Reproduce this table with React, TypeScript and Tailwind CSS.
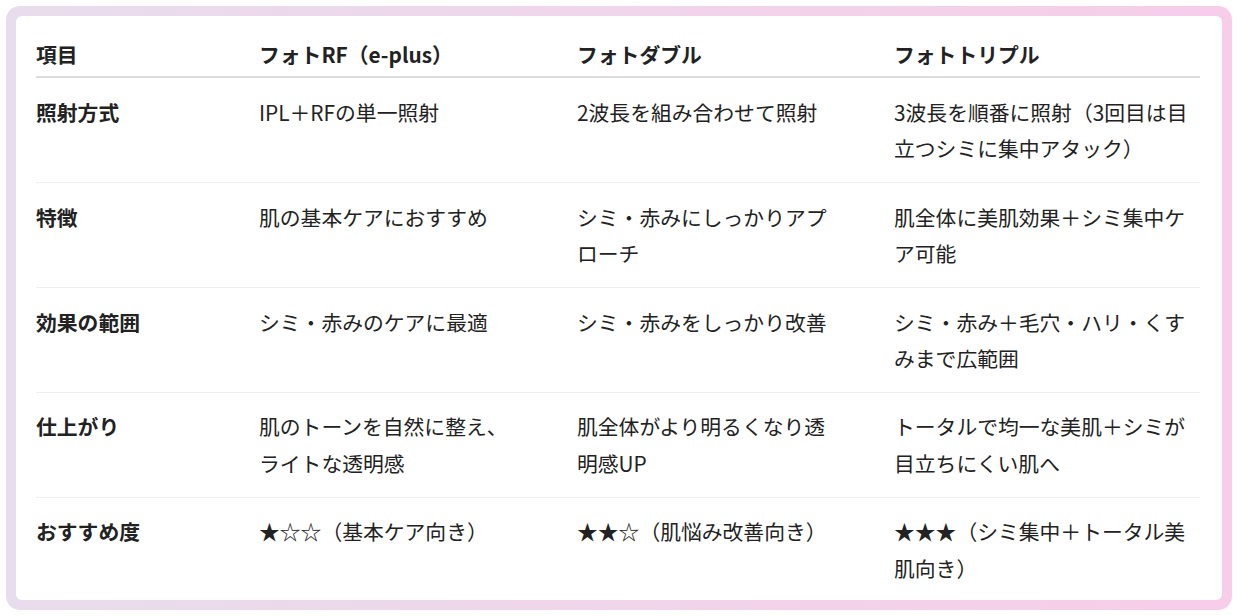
import React from "react";

type Row = { label: string; cells: [string, string, string] };

const rows: Row[] = [
  {
    label: "照射方式",
    cells: [
      "IPL＋RFの単一照射",
      "2波長を組み合わせて照射",
      "3波長を順番に照射（3回目は目立つシミに集中アタック）",
    ],
  },
  {
    label: "特徴",
    cells: [
      "肌の基本ケアにおすすめ",
      "シミ・赤みにしっかりアプローチ",
      "肌全体に美肌効果＋シミ集中ケア可能",
    ],
  },
  {
    label: "効果の範囲",
    cells: [
      "シミ・赤みのケアに最適",
      "シミ・赤みをしっかり改善",
      "シミ・赤み＋毛穴・ハリ・くすみまで広範囲",
    ],
  },
  {
    label: "仕上がり",
    cells: [
      "肌のトーンを自然に整え、ライトな透明感",
      "肌全体がより明るくなり透明感UP",
      "トータルで均一な美肌＋シミが目立ちにくい肌へ",
    ],
  },
  {
    label: "おすすめ度",
    cells: [
      "★☆☆（基本ケア向き）",
      "★★☆（肌悩み改善向き）",
      "★★★（シミ集中＋トータル美肌向き）",
    ],
  },
];

const colW = ["w-[223px]", "w-[318px]", "w-[317px]", "w-[306px]"];
const contentW = ["w-[200px]", "w-[262px]", "w-[262px]", "w-[300px]"];

export default function App() {
  return (
    <div
      className="w-[1244px] h-[616px] bg-white pl-[6px] pt-[6px]"
      style={{ fontFamily: '"Noto Sans CJK JP", "Noto Sans", sans-serif' }}
    >
      <div className="w-[1226px] h-[604px] rounded-[14px] bg-gradient-to-r from-[#e8ddec] to-[#f7cdea] p-[10px]">
        <div className="h-full w-full rounded-[6px] bg-white overflow-hidden pl-[20px] pt-[20px]">
          <table className="table-fixed border-collapse w-[1164px] text-[20.8px] leading-[36.4px] text-[#222]">
            <colgroup>
              {colW.map((c, i) => (
                <col key={i} className={c} />
              ))}
            </colgroup>
            <thead>
              <tr className="border-b-2 border-[#dddddd]">
                {["項目", "フォトRF（e-plus）", "フォトダブル", "フォトトリプル"].map((h, i) => (
                  <th key={i} className="p-0 pb-[4px] text-left align-top font-bold">
                    <div className={contentW[i]}>{h}</div>
                  </th>
                ))}
              </tr>
            </thead>
            <tbody>
              {rows.map((r, ri) => (
                <tr key={ri} className={ri < rows.length - 1 ? "border-b border-[#eeeeee]" : ""}>
                  <td className="p-0 py-[15.5px] align-top font-bold">
                    <div className={contentW[0]}>{r.label}</div>
                  </td>
                  {r.cells.map((c, ci) => (
                    <td key={ci} className="p-0 py-[15.5px] align-top font-normal">
                      <div className={contentW[ci + 1]}>{c}</div>
                    </td>
                  ))}
                </tr>
              ))}
            </tbody>
          </table>
        </div>
      </div>
    </div>
  );
}
